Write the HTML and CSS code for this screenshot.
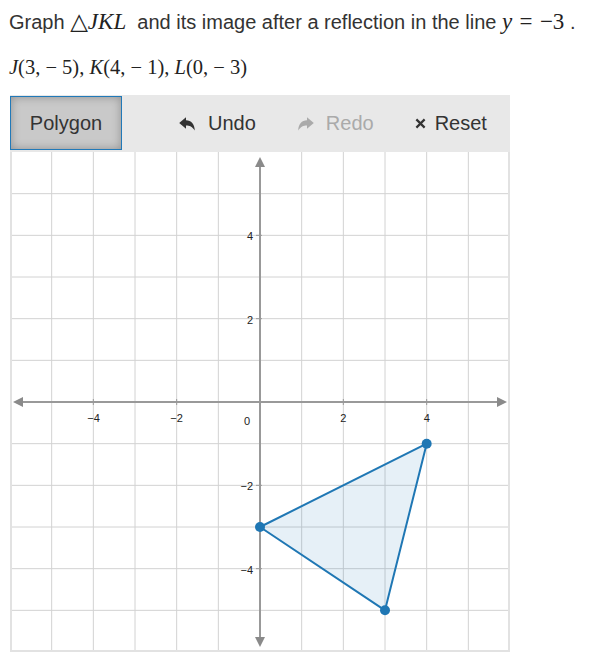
FILE: index.html
```html
<!DOCTYPE html>
<html>
<head>
<meta charset="utf-8">
<link rel="stylesheet" href="styles.css">
</head>
<body>
<div class="page">
  <p class="prompt">Graph <span class="math">△<i>JKL</i></span>&nbsp; and its image after a reflection in the line <span class="math"><i>y</i><span class="rel">=</span>−3</span> .</p>
  <p class="points"><i>J</i>(3, − 5), <i>K</i>(4, − 1), <i>L</i>(0, − 3)</p>
  <div class="tool">
    <div class="toolbar">
      <button class="btn-polygon">Polygon</button>
      <span class="action undo">
        <svg class="icon" viewBox="0 0 16 14" width="16" height="14"><path d="M7 0.3 L0.2 6 L7 11.7 V8.4 C10.6 8.4 13.4 9.6 15.8 13.6 C15.6 7.4 12.2 3.3 7 3.3 Z" fill="#333"/></svg>
        <span>Undo</span>
      </span>
      <span class="action redo">
        <svg class="icon" viewBox="0 0 16 14" width="16" height="14"><g transform="translate(16 0) scale(-1 1)"><path d="M7 0.3 L0.2 6 L7 11.7 V8.4 C10.6 8.4 13.4 9.6 15.8 13.6 C15.6 7.4 12.2 3.3 7 3.3 Z" fill="#aaa"/></g></svg>
        <span>Redo</span>
      </span>
      <span class="action reset">
        <svg class="icon-x" viewBox="0 0 12 12" width="11" height="11"><path d="M1.5 1.5 L10.5 10.5 M10.5 1.5 L1.5 10.5" stroke="#333" stroke-width="2.4"/></svg>
        <span>Reset</span>
      </span>
    </div>
    <svg class="graph" viewBox="0 0 500 500" width="500" height="500">
      <g stroke="#d2d2d2" stroke-width="1">
        <line x1="41.67" y1="0" x2="41.67" y2="500"/>
        <line x1="83.33" y1="0" x2="83.33" y2="500"/>
        <line x1="125" y1="0" x2="125" y2="500"/>
        <line x1="166.67" y1="0" x2="166.67" y2="500"/>
        <line x1="208.33" y1="0" x2="208.33" y2="500"/>
        <line x1="291.67" y1="0" x2="291.67" y2="500"/>
        <line x1="333.33" y1="0" x2="333.33" y2="500"/>
        <line x1="375" y1="0" x2="375" y2="500"/>
        <line x1="416.67" y1="0" x2="416.67" y2="500"/>
        <line x1="458.33" y1="0" x2="458.33" y2="500"/>
        <line y1="41.67" x1="0" y2="41.67" x2="500"/>
        <line y1="83.33" x1="0" y2="83.33" x2="500"/>
        <line y1="125" x1="0" y2="125" x2="500"/>
        <line y1="166.67" x1="0" y2="166.67" x2="500"/>
        <line y1="208.33" x1="0" y2="208.33" x2="500"/>
        <line y1="291.67" x1="0" y2="291.67" x2="500"/>
        <line y1="333.33" x1="0" y2="333.33" x2="500"/>
        <line y1="375" x1="0" y2="375" x2="500"/>
        <line y1="416.67" x1="0" y2="416.67" x2="500"/>
        <line y1="458.33" x1="0" y2="458.33" x2="500"/>
      </g>
      <g stroke="#e2e2e2" stroke-width="2" fill="none">
        <line x1="1" y1="0" x2="1" y2="500"/>
        <line x1="499" y1="0" x2="499" y2="500"/>
        <line x1="0" y1="499" x2="500" y2="499"/>
      </g>
      <g stroke="#999" stroke-width="2">
        <line x1="10" y1="250" x2="490" y2="250"/>
        <line x1="250" y1="12" x2="250" y2="488"/>
      </g>
      <g fill="#8a8a8a">
        <path d="M3 250 L13 245 L13 255 Z"/>
        <path d="M497 250 L487 245 L487 255 Z"/>
        <path d="M250 5 L245 15 L255 15 Z"/>
        <path d="M250 495 L245 485 L255 485 Z"/>
      </g>
      <g stroke="#999" stroke-width="1">
        <line x1="83.33" y1="247" x2="83.33" y2="253"/>
        <line x1="166.67" y1="247" x2="166.67" y2="253"/>
        <line x1="333.33" y1="247" x2="333.33" y2="253"/>
        <line x1="416.67" y1="247" x2="416.67" y2="253"/>
        <line y1="83.33" x1="246" y2="83.33" x2="252"/>
        <line y1="166.67" x1="246" y2="166.67" x2="252"/>
        <line y1="333.33" x1="246" y2="333.33" x2="252"/>
        <line y1="416.67" x1="246" y2="416.67" x2="252"/>
      </g>
      <g class="labels" font-size="11" fill="#222">
        <text x="83.5" y="270" text-anchor="middle">−4</text>
        <text x="166.5" y="270" text-anchor="middle">−2</text>
        <text x="333.3" y="270" text-anchor="middle">2</text>
        <text x="416.7" y="270" text-anchor="middle">4</text>
        <text x="237" y="273" text-anchor="middle">0</text>
        <text x="243" y="88" text-anchor="end">4</text>
        <text x="243" y="171.5" text-anchor="end">2</text>
        <text x="243" y="338" text-anchor="end">−2</text>
        <text x="243" y="421.5" text-anchor="end">−4</text>
      </g>
      <polygon points="375,458.33 416.67,291.67 250,375" fill="#1f77b4" fill-opacity="0.11" stroke="#1f77b4" stroke-width="2" stroke-linejoin="round"/>
      <g fill="#1f77b4">
        <circle cx="375" cy="458.33" r="5"/>
        <circle cx="416.67" cy="291.67" r="5"/>
        <circle cx="250" cy="375" r="5"/>
      </g>
    </svg>
  </div>
</div>
</body>
</html>
```

FILE: styles.css
```css
html, body {
  margin: 0;
  padding: 0;
  background: #fff;
}

.page {
  padding-left: 9px;
  font-family: "Liberation Sans", Arial, sans-serif;
  color: #333;
}

.prompt {
  margin: 10px 0 0;
  font-size: 20px;
  line-height: 24px;
  height: 24px;
  white-space: nowrap;
}

.math {
  font-family: "Liberation Serif", "DejaVu Serif", serif;
  font-size: 23px;
  color: #222;
}

.math .rel {
  margin: 0 0.32em;
}

.math i,
.points i {
  font-style: italic;
}

.points {
  margin: 22px 0 0;
  font-family: "Liberation Serif", "DejaVu Serif", serif;
  font-size: 20.5px;
  line-height: 22px;
  color: #222;
}

.tool {
  margin-top: 17px;
  margin-left: 1px;
  width: 500px;
}

.toolbar {
  display: flex;
  align-items: center;
  height: 57px;
  background: #e8e8e8;
  font-size: 20px;
}

.btn-polygon {
  box-sizing: border-box;
  width: 112px;
  height: 54px;
  margin-top: 1px;
  align-self: flex-start;
  border: 1px solid #2179b8;
  background: #c9c9c9;
  box-shadow: inset 0 0 10px rgba(0, 0, 0, 0.28);
  font-family: "Liberation Sans", Arial, sans-serif;
  font-size: 20px;
  color: #333;
  padding: 0;
}

.action {
  display: flex;
  align-items: center;
  color: #333;
}

.undo {
  margin-left: 57px;
  gap: 13px;
}

.redo {
  margin-left: 42px;
  gap: 12px;
  color: #aaa;
}

.reset {
  margin-left: 41px;
  gap: 9px;
}

.icon {
  display: block;
}

.icon-x {
  display: block;
}

.graph {
  display: block;
}

.labels text {
  font-family: "Liberation Sans", Arial, sans-serif;
}
```
